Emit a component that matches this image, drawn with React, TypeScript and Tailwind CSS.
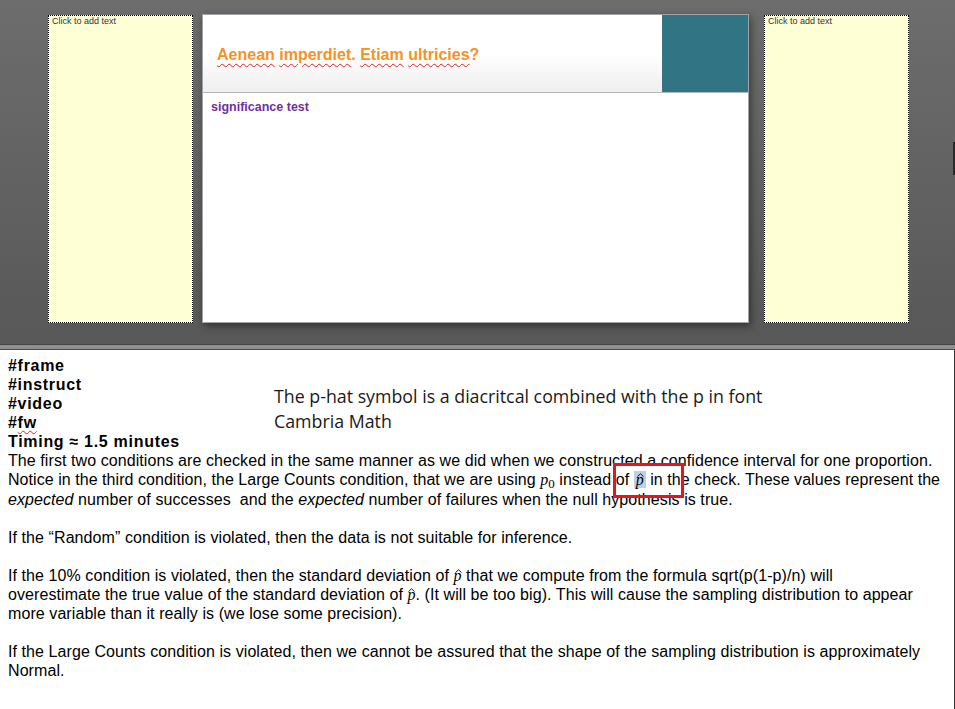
import React from "react";

const wavy = "underline decoration-wavy decoration-[#e02020] decoration-1 underline-offset-[3px]";
const wavyN = "underline decoration-wavy decoration-[#e02020] decoration-1 underline-offset-[2px]";

function Placeholder() {
  return (
    <div className="bg-white w-[145px] h-[308px] shrink-0">
      <div className="w-full h-full border border-dotted border-black bg-[#ffffd5] bg-clip-padding px-[3px] text-[9px] leading-[10px] text-[#333] font-['Liberation_Sans',Arial,sans-serif]">
        Click to add text
      </div>
    </div>
  );
}

function PHat() {
  return (
    <span className="relative inline-block font-['Liberation_Serif',serif] italic tracking-normal">
      p
      <svg className="absolute left-[1px] top-[3px]" width="7" height="4" viewBox="0 0 7 4">
        <polyline points="0.5,3.5 3.5,0.8 6.5,3.5" fill="none" stroke="#000" strokeWidth="0.9" />
      </svg>
    </span>
  );
}

export default function App() {
  return (
    <div className="w-[955px] h-[709px] overflow-hidden flex flex-col bg-white">
      {/* slide area */}
      <div className="relative h-[344px] shrink-0 bg-gradient-to-b from-[#6d6d6d] to-[#585858] flex items-start pl-[48px] pt-[15px] gap-[9px]">
        <Placeholder />
        <div className="w-[547px] h-[309px] -mt-px shrink-0 bg-white border border-[#a0a4a8] shadow-[2px_3px_8px_rgba(0,0,0,0.45)] flex flex-col font-['Liberation_Sans',Arial,sans-serif]">
          <div className="h-[78px] flex border-b border-[#b8b8b8] bg-gradient-to-b from-white via-white to-[#efefef]">
            <div className="flex-1 flex items-center pl-[14px] pt-[2px]">
              <span className="text-[#f59227] font-bold text-[16px]">
                <span className={wavy}>Aenean</span> <span className={wavy}>imperdiet</span>.{" "}
                <span className={wavy}>Etiam</span> <span className={wavy}>ultricies</span>?
              </span>
            </div>
            <div className="w-[86px] bg-[#317584]" />
          </div>
          <div className="pl-[8px] pt-[5px] text-[#7030a0] font-bold text-[12.5px]">significance test</div>
        </div>
        <div className="ml-[6px]">
          <Placeholder />
        </div>
        <div className="absolute right-0 top-[142px] w-[2px] h-[33px] bg-[#2a2a2a]" />
      </div>
      {/* splitter */}
      <div className="h-[6px] shrink-0 bg-[#8f8f8f] border-t border-[#444] border-b border-b-[#4a4a4a]" />
      {/* notes */}
      <div className="relative flex-1 border-r border-[#333] pl-[8px] pt-[6px] text-[16px] leading-[19px] tracking-[0.08px] text-black font-['Liberation_Sans',Arial,sans-serif] whitespace-nowrap">
        <div className="font-bold tracking-[0.7px]">#frame</div>
        <div className="font-bold tracking-[0.7px]">#instruct</div>
        <div className="font-bold tracking-[0.7px]">#video</div>
        <div className="font-bold tracking-[0.7px]">#<span className={wavyN}>fw</span></div>
        <div className="font-bold tracking-[0.7px]">Timing ≈ 1.5 minutes</div>
        <div>The first two conditions are checked in the same manner as we did when we constructed a confidence interval for one proportion.</div>
        <div className="tracking-[0.05px]">
          Notice in the third condition, the Large Counts condition, that we are using{" "}
          <span className="font-['Liberation_Serif',serif] italic">p</span>
          <span className="font-['Liberation_Serif',serif] text-[13px] relative top-[3px]">0</span> instead of{" "}
          <span className="bg-[#bcd0e8] px-[2px]"><PHat /></span> in the check. These values represent the
        </div>
        <div>
          <i>expected</i> number of successes&nbsp; and the <i>expected</i> number of failures when the null hypothesis is true.
        </div>
        <div>&nbsp;</div>
        <div>If the “Random” condition is violated, then the data is not suitable for inference.</div>
        <div>&nbsp;</div>
        <div>If the 10% condition is violated, then the standard deviation of <PHat /> that we compute from the formula sqrt(p(1-p)/n) will</div>
        <div>overestimate the true value of the standard deviation of <PHat />. (It will be too big). This will cause the sampling distribution to appear</div>
        <div>more variable than it really is (we lose some precision).</div>
        <div>&nbsp;</div>
        <div>If the Large Counts condition is violated, then we cannot be assured that the shape of the sampling distribution is approximately</div>
        <div>Normal.</div>

        <div className="absolute left-[274px] top-[34px] text-[17.8px] leading-[25px] tracking-normal text-[#1a1a1a] font-['Open_Sans',sans-serif]">
          <div>The p-hat symbol is a diacritcal combined with the p in font</div>
          <div>Cambria Math</div>
        </div>
        <div className="absolute left-[613px] top-[113px] w-[71px] h-[35px] border-[3px] border-[#e8141b]" />
      </div>
    </div>
  );
}
